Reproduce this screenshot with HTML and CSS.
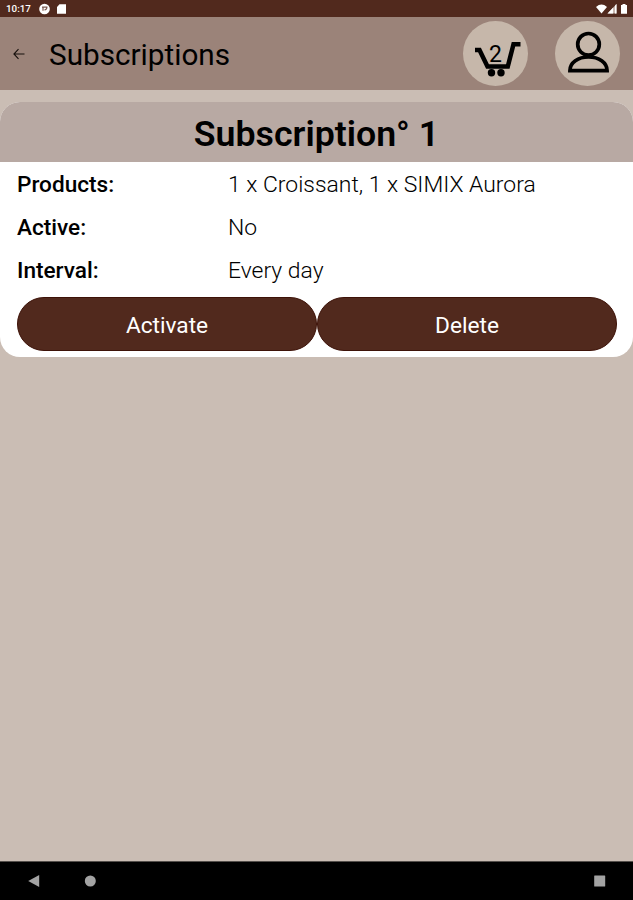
FILE: index.html
```
<!DOCTYPE html>
<html lang="en">
<head>
<meta charset="utf-8">
<title>Subscriptions</title>
<link rel="stylesheet" href="styles.css">
</head>
<body>
<div class="statusbar">
  <span class="clock">10:17</span>
  <svg class="status-left" width="28" height="12" viewBox="0 0 28 12"><circle cx="5.500" cy="6" r="5.300" fill="#fff"/><path d="M3 4.200h5.500M4 4.200v3.600M5.500 6.800c1.500 0 2.300-.8 2.300-2.200" fill="none" stroke="#7b5a50" stroke-width="1.200"/><path d="M20.500 1.200H27v9.600h-9V4z" fill="#fff"/></svg>
  <svg class="status-right" width="34" height="12" viewBox="0 0 34 12"><path d="M0 4Q5.500-.8 11 4L5.500 10.500z" fill="#fff"/><path d="M20.500 1v9.500H11.500z" fill="#c9b8b2"/><path d="M17 4.700v5.800h-5.500z" fill="#fff"/><path d="M19 2.500 20.500 1v9.500H19z" fill="#fff"/><path d="M26.500 1h3v1H31v8.700h-6V2h1.500z" fill="#fff"/></svg>
</div>
<header class="appbar">
  <svg class="back" width="12" height="12" viewBox="0 0 12 12"><path d="M11.500 6H1M5.500 1.200L.9 6l4.600 4.800" fill="none" stroke="#17100c" stroke-width="1.100"/></svg>
  <h1>Subscriptions</h1>
  <div class="round cart">
    <svg width="65" height="65" viewBox="0 0 65 65"><path d="M12 29H16.500L24.500 45.500h20.300l5.700-22.300h7" fill="none" stroke="#000" stroke-width="4.500"/><circle cx="28.500" cy="51.700" r="3.700"/><circle cx="38" cy="51.700" r="3.700"/></svg>
    <span class="count">2</span>
  </div>
  <div class="round">
    <svg width="65" height="65" viewBox="0 0 65 65"><g fill="none" stroke="#000" stroke-width="3.700"><circle cx="33.500" cy="23.300" r="10.800"/><path d="M14.900 49.700H52.100C52.100 41.500 43.800 36 33.500 36S14.900 41.500 14.900 49.700z"/></g></svg>
  </div>
</header>
<main>
  <section class="card">
    <h2>Subscription° 1</h2>
    <dl>
      <dt>Products:</dt><dd>1 x Croissant, 1 x SIMIX Aurora</dd>
      <dt>Active:</dt><dd>No</dd>
      <dt>Interval:</dt><dd>Every day</dd>
    </dl>
    <div class="actions"><button>Activate</button><button>Delete</button></div>
  </section>
</main>
<nav class="navbar">
  <svg width="12" height="14" viewBox="0 0 12 14"><path d="M11.200 1v12L.2 7z"/></svg>
  <svg class="home" width="12" height="12" viewBox="0 0 12 12"><circle cx="6.300" cy="6" r="5.500"/></svg>
  <svg class="recent" width="12" height="12" viewBox="0 0 12 12"><rect x=".2" y=".5" width="11" height="11" rx=".5"/></svg>
</nav>
</body>
</html>
```
FILE: styles.css
```
* { box-sizing: border-box; }
body {
  margin: 0;
  height: 900px;
  display: flex;
  flex-direction: column;
  background: #cabdb4;
  color: #000;
  font-family: Roboto, sans-serif;
  overflow: hidden;
}
svg { display: block; flex: none; }
h1, h2, dl, dd { margin: 0; }
.statusbar {
  height: 17px;
  flex: none;
  display: flex;
  align-items: center;
  padding: 1px 3px 0 6px;
  background: #51291d;
  color: #fff;
}
.clock { width: 33px; font-size: 9.8px; font-weight: 500; line-height: 12px; }
.status-right { margin-left: auto; }
.appbar {
  height: 73px;
  flex: none;
  display: flex;
  align-items: center;
  padding: 0 13px;
  background: #9b8379;
}
.appbar h1 {
  margin: 3px auto 0 24px;
  font-size: 29.7px;
  font-weight: 400;
  line-height: 36px;
}
.round {
  position: relative;
  width: 65px;
  height: 65px;
  border-radius: 50%;
  background: #c6b7aa;
}
.cart { margin-right: 27px; }
.count {
  position: absolute;
  left: 0;
  width: 65px;
  top: 21px;
  text-align: center;
  font-size: 23px;
  line-height: 26px;
}
main { flex: 1; padding-top: 12px; }
.card {
  height: 255px;
  border-radius: 20px;
  background: #fff;
  overflow: hidden;
}
.card h2 {
  height: 60px;
  padding-top: 1px;
  background: #b8a9a3;
  font-size: 35.7px;
  font-weight: 600;
  line-height: 62px;
  text-align: center;
}
dl {
  display: grid;
  grid-template-columns: 211px 1fr;
  grid-auto-rows: 43px;
  padding: 1px 17px;
  font-size: 22.9px;
  line-height: 43px;
}
dt { font-size: 22.6px; font-weight: 500; }
dd { font-weight: 300; }
.actions { display: flex; padding: 4px 16px 0 17px; }
.actions button {
  flex: 1;
  height: 54px;
  border: 1px solid #3d1208;
  border-radius: 27px;
  background: #51291d;
  color: #fff;
  font: 400 22.7px/52px Roboto, sans-serif;
  padding: 2px 0 0;
}
.navbar {
  height: 39px;
  flex: none;
  display: flex;
  align-items: center;
  padding: 0 27px 0 28px;
  border-top: 1px solid #55504c;
  background: #000;
  fill: #a3a3a3;
}
.home { margin-left: 44px; }
.recent { margin-left: auto; }
```
